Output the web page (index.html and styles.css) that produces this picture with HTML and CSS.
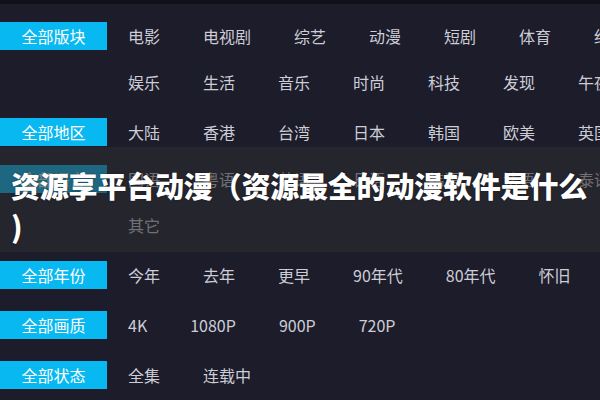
FILE: index.html
```html
<!DOCTYPE html>
<html lang="zh-CN">
<head>
<meta charset="utf-8">
<title>资源享平台动漫</title>
<link rel="stylesheet" href="styles.css">
</head>
<body>
<div class="page">
  <div class="filters">
    <div class="row">
      <div class="label">全部版块</div>
      <div class="items">
        <span>电影</span><span>电视剧</span><span>综艺</span><span>动漫</span><span>短剧</span><span>体育</span><span>纪录片</span>
        <span>娱乐</span><span>生活</span><span>音乐</span><span>时尚</span><span>科技</span><span>发现</span><span>午夜</span>
      </div>
    </div>
    <div class="row spaced">
      <div class="label">全部地区</div>
      <div class="items">
        <span>大陆</span><span>香港</span><span>台湾</span><span>日本</span><span>韩国</span><span>欧美</span><span>英国</span>
      </div>
    </div>
    <div class="row">
      <div class="label">全部语言</div>
      <div class="items">
        <span>国语</span><span>粤语</span><span>英语</span><span>日语</span><span>韩语</span><span>法语</span><span>泰语</span>
        <span>其它</span>
      </div>
    </div>
    <div class="row spaced">
      <div class="label">全部年份</div>
      <div class="items">
        <span>今年</span><span>去年</span><span>更早</span><span>90年代</span><span>80年代</span><span>怀旧</span>
      </div>
    </div>
    <div class="row spaced">
      <div class="label">全部画质</div>
      <div class="items">
        <span>4K</span><span>1080P</span><span>900P</span><span>720P</span>
      </div>
    </div>
    <div class="row spaced">
      <div class="label">全部状态</div>
      <div class="items">
        <span>全集</span><span>连载中</span>
      </div>
    </div>
  </div>
  <div class="banner">
    <h1 class="title">资源享平台动漫（资源最全的动漫软件是什么<br>)</h1>
  </div>
</div>
</body>
</html>
```
FILE: styles.css
```css
html, body {
  margin: 0;
  padding: 0;
}
body {
  width: 600px;
  height: 400px;
  overflow: hidden;
  background: #1c1c2b;
  font-family: "Noto Sans CJK SC", "Noto Sans", sans-serif;
}
.page {
  position: relative;
  width: 600px;
  height: 400px;
  overflow: hidden;
  border-top: 4px solid #10101a;
  box-sizing: border-box;
}
.filters {
  display: flex;
  flex-direction: column;
  gap: 19px;
  padding-top: 18px;
}
.row {
  display: flex;
  align-items: flex-start;
  gap: 21px;
}
.row.spaced {
  margin-top: 3px;
}
.label {
  flex: none;
  width: 107px;
  height: 28px;
  line-height: 28px;
  background: #08b8f0;
  color: #ffffff;
  font-size: 16px;
  text-align: center;
}
.items {
  flex: none;
  width: 532px;
  display: flex;
  flex-wrap: wrap;
  column-gap: 43px;
  row-gap: 18px;
  color: #cdcdd5;
  font-size: 16px;
  line-height: 28px;
}
.items span {
  white-space: nowrap;
}
.banner {
  position: absolute;
  left: 0;
  right: 0;
  top: 143px;
  height: 105px;
  box-sizing: border-box;
  padding: 18px 0 0 11px;
  background: rgba(44, 44, 46, 0.58);
}
.title {
  margin: 0;
  color: #ffffff;
  font-size: 29px;
  font-weight: 900;
  line-height: 40px;
  letter-spacing: -0.2px;
  white-space: nowrap;
  text-shadow: 0 0 2px rgba(0, 0, 0, 0.4);
}
```
